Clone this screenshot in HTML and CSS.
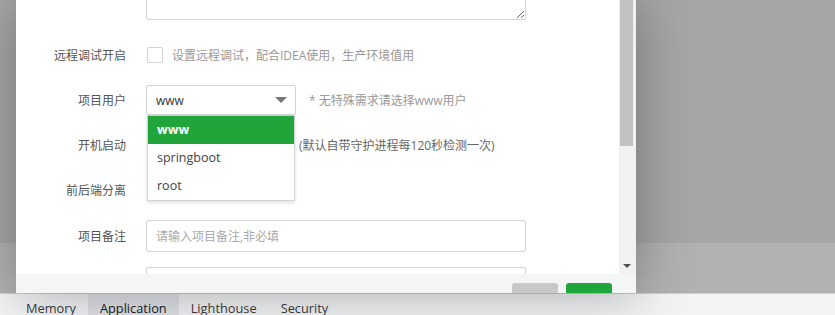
FILE: index.html
```html
<!DOCTYPE html>
<html lang="zh-CN">
<head>
  <meta charset="UTF-8">
  <title>添加Java项目</title>
  <link rel="stylesheet" href="styles.css">
</head>
<body>

  <div class="pagina">
    <div class="fondo">
      <div class="fondo-arriba"></div>
      <div class="fondo-abajo"></div>
    </div>

    <div class="layer">
      <div class="layer-body">
        <div class="form-scroll">
          <div class="form">

            <div class="form-item item-textarea">
              <span class="label"></span>
              <textarea class="textarea"></textarea>
            </div>

            <div class="form-item">
              <span class="label">远程调试开启</span>
              <span class="checkbox"></span>
              <span class="tip tip-check">设置远程调试，配合IDEA使用，生产环境值用</span>
            </div>

            <div class="form-item">
              <span class="label">项目用户</span>
              <div class="select">
                <span class="select-value">www</span>
                <span class="select-arrow"></span>
                <ul class="select-menu">
                  <li class="activo">www</li>
                  <li>springboot</li>
                  <li>root</li>
                </ul>
              </div>
              <span class="tip tip-select">* 无特殊需求请选择www用户</span>
            </div>

            <div class="form-item">
              <span class="label">开机启动</span>
              <span class="tip tip-oculto">(默认自带守护进程每120秒检测一次)</span>
            </div>

            <div class="form-item">
              <span class="label">前后端分离</span>
              <span class="checkbox"></span>
            </div>

            <div class="form-item item-input">
              <span class="label">项目备注</span>
              <input class="input" type="text" placeholder="请输入项目备注,非必填">
            </div>

            <div class="form-item item-input">
              <span class="label"></span>
              <input class="input" type="text">
            </div>

          </div>
        </div>

        <div class="scrollbar">
          <div class="scrollbar-thumb"></div>
          <div class="scrollbar-flecha"></div>
        </div>
      </div>

      <div class="layer-footer">
        <span class="btn btn-gris"></span>
        <span class="btn btn-verde"></span>
      </div>
    </div>
  </div>

  <div class="devtools">
    <span class="tab">Memory</span>
    <span class="tab tab-activa">Application</span>
    <span class="tab">Lighthouse</span>
    <span class="tab">Security</span>
  </div>

</body>
</html>
```

FILE: styles.css
```css
* {
  box-sizing: border-box;
}

html, body {
  margin: 0;
  width: 835px;
  height: 315px;
  overflow: hidden;
}

body {
  font-family: 'Open Sans', 'Noto Sans CJK SC', sans-serif;
  font-size: 12px;
  color: #555;
}

.pagina {
  position: relative;
  height: 293px;
}

.fondo {
  display: flex;
  flex-direction: column;
  height: 100%;
}

.fondo-arriba {
  height: 243px;
  background-color: #a6a6a6;
}

.fondo-abajo {
  flex: 1;
  background-color: #b1b1b1;
}

/* ventana modal */
.layer {
  position: absolute;
  left: 16px;
  top: 0;
  width: 620px;
  height: 293px;
  display: flex;
  flex-direction: column;
  background-color: #fff;
  box-shadow: 1px 1px 50px rgba(0,0,0,0.3);
}

.layer-body {
  display: flex;
  height: 274px;
}

.form-scroll {
  flex: 1;
  overflow: hidden;
}

.form-item {
  display: flex;
  align-items: center;
  height: 30px;
  margin-bottom: 15px;
}

.label {
  width: 110px;
  margin-right: 20px;
  text-align: right;
  color: #555;
  flex-shrink: 0;
}

.item-textarea {
  height: 60px;
  margin-top: -40px;
  margin-bottom: 20px;
}

.textarea {
  width: 380px;
  height: 60px;
  border: 1px solid #d2d2d2;
  border-radius: 2px;
  resize: vertical;
  font-family: inherit;
}

.checkbox {
  width: 16px;
  height: 16px;
  margin-left: 1px;
  border: 1px solid #d2d2d2;
  border-radius: 2px;
  background-color: #fff;
}

.tip {
  color: #999;
}

.tip-check {
  margin-left: 9px;
}

.tip-select {
  margin-left: 13px;
}

.tip-oculto {
  margin-left: 153px;
  color: #666;
}

/* select */
.select {
  position: relative;
  width: 150px;
  height: 30px;
  border: 1px solid #d2d2d2;
  border-radius: 2px;
  display: flex;
  align-items: center;
  padding-left: 9px;
}

.select-value {
  color: #333;
}

.select-arrow {
  position: absolute;
  right: 8px;
  top: 11px;
  width: 0;
  height: 0;
  border-left: 6px solid transparent;
  border-right: 6px solid transparent;
  border-top: 6px solid #777;
}

.select-menu {
  position: absolute;
  left: 0;
  right: 0;
  top: calc(100% + 1px);
  margin: 0;
  padding: 0;
  list-style: none;
  background-color: #fff;
  border: 1px solid #d2d2d2;
  box-shadow: 0 2px 4px rgba(0,0,0,0.12);
  z-index: 5;
}

.select-menu li {
  height: 28px;
  line-height: 28px;
  padding: 0 9px;
  color: #444;
  font-size: 12.5px;
}

.select-menu li.activo {
  background-color: #20a53a;
  color: #fff;
  font-weight: bold;
}

.item-input {
  height: 32px;
}

.input {
  width: 380px;
  height: 32px;
  border: 1px solid #d2d2d2;
  border-radius: 2px;
  padding: 0 9px;
  font-family: inherit;
  font-size: 12px;
}

.input::placeholder {
  color: #aaa;
}

/* barra de scroll */
.scrollbar {
  width: 17px;
  display: flex;
  flex-direction: column;
  align-items: flex-start;
  background-color: #f1f1f1;
  padding-left: 1px;
}

.scrollbar-thumb {
  width: 13px;
  height: 146px;
  background-color: #c1c1c1;
}

.scrollbar-flecha {
  margin-top: auto;
  margin-bottom: 6px;
  margin-left: 3px;
  width: 0;
  height: 0;
  border-left: 4px solid transparent;
  border-right: 4px solid transparent;
  border-top: 4px solid #505050;
}

.layer-footer {
  flex: 1;
  display: flex;
  justify-content: flex-end;
  align-items: flex-start;
  gap: 8px;
  padding: 9px 24px 0 0;
  background-color: #f4f5f5;
  overflow: hidden;
}

.btn {
  width: 46px;
  height: 30px;
  border-radius: 3px;
}

.btn-gris { background-color: #c8c8c8; }
.btn-verde { background-color: #20a53a; }

/* pestañas de devtools */
.devtools {
  display: flex;
  height: 22px;
  padding-left: 14px;
  border-top: 1px solid #cbcdd1;
  background-color: #f1f3f4;
  overflow: hidden;
}

.tab {
  padding: 0 12px;
  font-size: 12.8px;
  line-height: 28px;
  color: #3c3c3c;
  white-space: nowrap;
}

.tab-activa {
  background-color: #dee1e6;
  color: #202124;
}
```
